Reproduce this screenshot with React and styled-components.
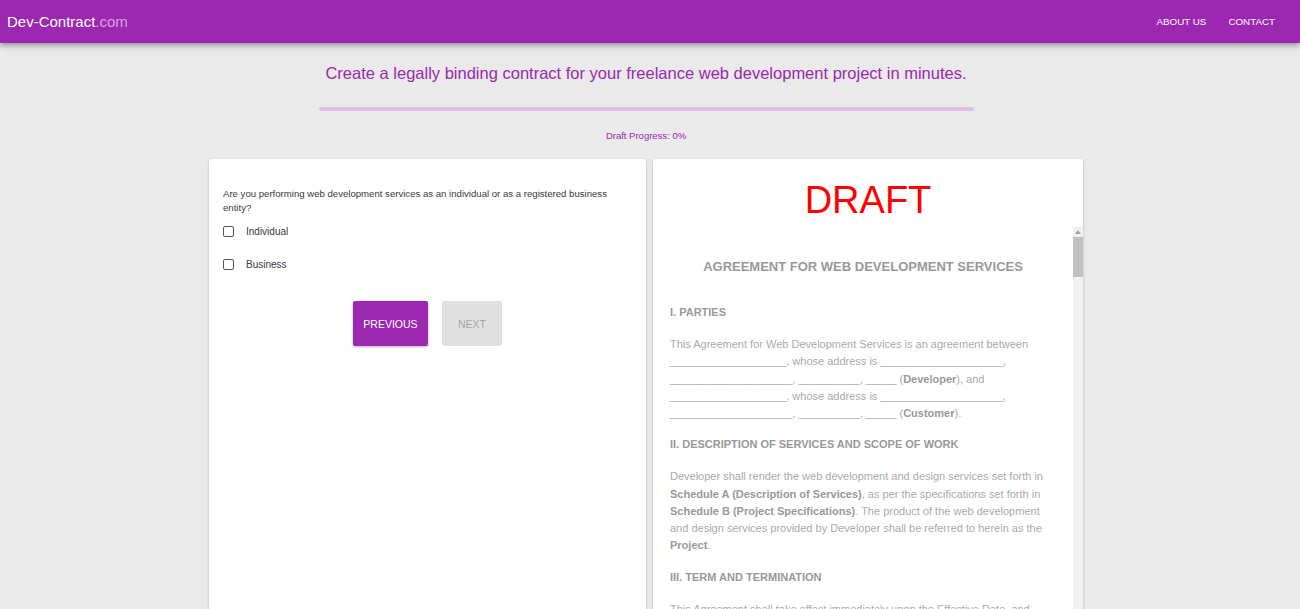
import React from 'react';
import styled, { createGlobalStyle } from 'styled-components';

const GlobalStyle = createGlobalStyle`
  html, body {
    margin: 0;
    padding: 0;
    background: #eaeaea;
    font-family: Arial, "Liberation Sans", Helvetica, sans-serif;
    overflow: hidden;
  }
`;

const AppBar = styled.header`
  height: 43px;
  background: #9c27b0;
  display: flex;
  align-items: center;
  justify-content: space-between;
  padding: 0 25px 0 7px;
  box-shadow: 0 2px 4px -1px rgba(0,0,0,0.2), 0 4px 5px 0 rgba(0,0,0,0.14), 0 1px 10px 0 rgba(0,0,0,0.12);
  position: relative;
  z-index: 2;
`;

const Logo = styled.div`
  color: #fff;
  font-size: 15px;
  span { color: rgba(255,255,255,0.6); }
`;

const Nav = styled.nav`
  display: flex;
  gap: 22px;
`;

const NavLink = styled.a`
  color: #fff;
  font-size: 9.8px;
  text-transform: uppercase;
  text-decoration: none;
`;

const Main = styled.main`
  padding-right: 8px;
  display: flex;
  flex-direction: column;
  align-items: center;
`;

const Headline = styled.h1`
  margin: 21px 0 0;
  font-size: 16.5px;
  font-weight: normal;
  color: #9c27b0;
  line-height: 18px;
`;

const Progress = styled.div`
  margin-top: 25px;
  width: 655px;
  height: 4px;
  border-radius: 2px;
  background: #e1bee7;
`;

const ProgressLabel = styled.div`
  margin-top: 19px;
  font-size: 9.5px;
  color: #9c27b0;
  line-height: 12px;
`;

const Cards = styled.div`
  margin-top: 17px;
  display: grid;
  grid-template-columns: 437px 430px;
  gap: 7px;
`;

const Card = styled.section`
  background: #fff;
  height: 620px;
  box-shadow: 0 1px 3px 0 rgba(0,0,0,0.2), 0 1px 1px 0 rgba(0,0,0,0.14), 0 2px 1px -1px rgba(0,0,0,0.12);
  border-radius: 2px;
  display: flex;
  flex-direction: column;
  overflow: hidden;
`;

const FormCard = styled(Card)`
  padding: 28px 14px 0;
  box-sizing: border-box;
`;

const Question = styled.p`
  margin: 0;
  font-size: 9.6px;
  line-height: 14px;
  color: #3a3a3a;
`;

const Options = styled.div`
  margin-top: 10px;
  display: flex;
  flex-direction: column;
  gap: 21px;
`;

const Option = styled.label`
  display: flex;
  align-items: center;
  gap: 12px;
  font-size: 10px;
  color: #3a3a3a;
  height: 12px;
`;

const Box = styled.span`
  width: 9px;
  height: 9px;
  border: 1.5px solid #555;
  border-radius: 2px;
`;

const Actions = styled.div`
  margin-top: 31px;
  display: flex;
  justify-content: center;
  gap: 14px;
`;

const Button = styled.button`
  width: ${p => p.$w}px;
  height: 45px;
  border: none;
  border-radius: 2px;
  font-family: inherit;
  font-size: 10.5px;
  text-transform: uppercase;
  background: ${p => (p.$disabled ? '#e0e0e0' : '#9c27b0')};
  color: ${p => (p.$disabled ? '#a6a6a6' : '#fff')};
  box-shadow: ${p => (p.$disabled ? 'none' : '0 1px 3px rgba(0,0,0,0.3)')};
`;

const DraftMark = styled.div`
  height: 68px;
  flex: none;
  display: flex;
  align-items: center;
  justify-content: center;
  color: #f00;
  font-size: 38px;
  padding-top: 15px;
  box-sizing: border-box;
`;

const ScrollFrame = styled.div`
  flex: 1;
  min-height: 0;
  display: flex;
`;

const DocBody = styled.div`
  flex: 1;
  overflow: hidden;
  padding: 0 20px 0 17px;
  color: #aaa;
  font-size: 11px;
  line-height: 17.25px;
`;

const Track = styled.div`
  width: 10px;
  flex: none;
  background: #f1f1f1;
  display: flex;
  flex-direction: column;
  align-items: center;
  padding-top: 3px;
  gap: 3px;
`;

const Thumb = styled.div`
  width: 10px;
  height: 40px;
  background: #c1c1c1;
`;

const DocTitle = styled.h2`
  margin: 31px 0 29px;
  text-align: center;
  font-size: 13px;
  color: #999;
  line-height: 17px;
  padding-left: 3px;
`;

const SectionHead = styled.h3`
  margin: 14px 0 15px;
  font-size: 11px;
  color: #999;
  line-height: 17px;
`;

const Para = styled.p`
  margin: 0;
  b { color: #999; }
`;

const blank = n => '_'.repeat(n);

export default function App() {
  return (
    <>
      <GlobalStyle />
      <AppBar>
        <Logo>Dev-Contract<span>.com</span></Logo>
        <Nav>
          <NavLink href="#">About us</NavLink>
          <NavLink href="#">Contact</NavLink>
        </Nav>
      </AppBar>
      <Main>
        <Headline>Create a legally binding contract for your freelance web development project in minutes.</Headline>
        <Progress />
        <ProgressLabel>Draft Progress: 0%</ProgressLabel>
        <Cards>
          <FormCard>
            <Question>Are you performing web development services as an individual or as a registered business entity?</Question>
            <Options>
              <Option><Box />Individual</Option>
              <Option><Box />Business</Option>
            </Options>
            <Actions>
              <Button $w={75}>Previous</Button>
              <Button $w={60} $disabled>Next</Button>
            </Actions>
          </FormCard>
          <Card>
            <DraftMark>DRAFT</DraftMark>
            <ScrollFrame>
              <DocBody>
                <DocTitle>AGREEMENT FOR WEB DEVELOPMENT SERVICES</DocTitle>
                <SectionHead>I. PARTIES</SectionHead>
                <Para>
                  This Agreement for Web Development Services is an agreement between {blank(19)}, whose address is {blank(20)}, {blank(20)}, {blank(10)}, {blank(5)} (<b>Developer</b>), and {blank(19)}, whose address is {blank(20)}, {blank(20)}, {blank(10)}, {blank(5)} (<b>Customer</b>).
                </Para>
                <SectionHead>II. DESCRIPTION OF SERVICES AND SCOPE OF WORK</SectionHead>
                <Para>
                  Developer shall render the web development and design services set forth in <b>Schedule A (Description of Services)</b>, as per the specifications set forth in <b>Schedule B (Project Specifications)</b>. The product of the web development and design services provided by Developer shall be referred to herein as the <b>Project</b>.
                </Para>
                <SectionHead>III. TERM AND TERMINATION</SectionHead>
                <Para>
                  This Agreement shall take effect immediately upon the Effective Date, and shall remain in full force and effect until the Project is completed and delivered, unless terminated earlier in accordance with this Agreement.
                </Para>
              </DocBody>
              <Track>
                <svg width="6" height="4" viewBox="0 0 6 4"><path d="M3 0L6 4H0z" fill="#a3a3a3" /></svg>
                <Thumb />
              </Track>
            </ScrollFrame>
          </Card>
        </Cards>
      </Main>
    </>
  );
}
